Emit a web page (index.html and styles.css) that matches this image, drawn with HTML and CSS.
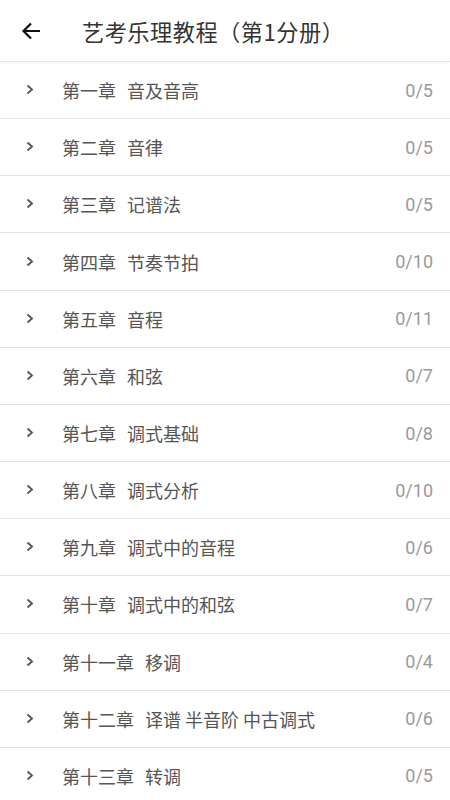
FILE: index.html
```html
<!DOCTYPE html>
<html lang="zh">
<head>
<meta charset="utf-8">
<link rel="stylesheet" href="styles.css">
</head>
<body>
<header class="bar">
  <svg class="back" width="20" height="18" viewBox="0 0 20 18"><path d="M19 9H3M10 1.5L2.5 9L10 16.5" fill="none" stroke="#111" stroke-width="2.2"/></svg>
  <h1 class="title">艺考乐理教程（第1分册）</h1>
</header>
<ul class="list">
  <li class="row"><svg class="chev" width="8" height="11" viewBox="0 0 8 11"><path d="M1.5 1.5L6 5.5L1.5 9.5" fill="none" stroke="#555" stroke-width="1.8"/></svg><span class="no">第一章</span><span class="name">音及音高</span><span class="count">0/5</span></li>
  <li class="row"><svg class="chev" width="8" height="11" viewBox="0 0 8 11"><path d="M1.5 1.5L6 5.5L1.5 9.5" fill="none" stroke="#555" stroke-width="1.8"/></svg><span class="no">第二章</span><span class="name">音律</span><span class="count">0/5</span></li>
  <li class="row"><svg class="chev" width="8" height="11" viewBox="0 0 8 11"><path d="M1.5 1.5L6 5.5L1.5 9.5" fill="none" stroke="#555" stroke-width="1.8"/></svg><span class="no">第三章</span><span class="name">记谱法</span><span class="count">0/5</span></li>
  <li class="row"><svg class="chev" width="8" height="11" viewBox="0 0 8 11"><path d="M1.5 1.5L6 5.5L1.5 9.5" fill="none" stroke="#555" stroke-width="1.8"/></svg><span class="no">第四章</span><span class="name">节奏节拍</span><span class="count">0/10</span></li>
  <li class="row"><svg class="chev" width="8" height="11" viewBox="0 0 8 11"><path d="M1.5 1.5L6 5.5L1.5 9.5" fill="none" stroke="#555" stroke-width="1.8"/></svg><span class="no">第五章</span><span class="name">音程</span><span class="count">0/11</span></li>
  <li class="row"><svg class="chev" width="8" height="11" viewBox="0 0 8 11"><path d="M1.5 1.5L6 5.5L1.5 9.5" fill="none" stroke="#555" stroke-width="1.8"/></svg><span class="no">第六章</span><span class="name">和弦</span><span class="count">0/7</span></li>
  <li class="row"><svg class="chev" width="8" height="11" viewBox="0 0 8 11"><path d="M1.5 1.5L6 5.5L1.5 9.5" fill="none" stroke="#555" stroke-width="1.8"/></svg><span class="no">第七章</span><span class="name">调式基础</span><span class="count">0/8</span></li>
  <li class="row"><svg class="chev" width="8" height="11" viewBox="0 0 8 11"><path d="M1.5 1.5L6 5.5L1.5 9.5" fill="none" stroke="#555" stroke-width="1.8"/></svg><span class="no">第八章</span><span class="name">调式分析</span><span class="count">0/10</span></li>
  <li class="row"><svg class="chev" width="8" height="11" viewBox="0 0 8 11"><path d="M1.5 1.5L6 5.5L1.5 9.5" fill="none" stroke="#555" stroke-width="1.8"/></svg><span class="no">第九章</span><span class="name">调式中的音程</span><span class="count">0/6</span></li>
  <li class="row"><svg class="chev" width="8" height="11" viewBox="0 0 8 11"><path d="M1.5 1.5L6 5.5L1.5 9.5" fill="none" stroke="#555" stroke-width="1.8"/></svg><span class="no">第十章</span><span class="name">调式中的和弦</span><span class="count">0/7</span></li>
  <li class="row"><svg class="chev" width="8" height="11" viewBox="0 0 8 11"><path d="M1.5 1.5L6 5.5L1.5 9.5" fill="none" stroke="#555" stroke-width="1.8"/></svg><span class="no">第十一章</span><span class="name">移调</span><span class="count">0/4</span></li>
  <li class="row"><svg class="chev" width="8" height="11" viewBox="0 0 8 11"><path d="M1.5 1.5L6 5.5L1.5 9.5" fill="none" stroke="#555" stroke-width="1.8"/></svg><span class="no">第十二章</span><span class="name">译谱 半音阶 中古调式</span><span class="count">0/6</span></li>
  <li class="row"><svg class="chev" width="8" height="11" viewBox="0 0 8 11"><path d="M1.5 1.5L6 5.5L1.5 9.5" fill="none" stroke="#555" stroke-width="1.8"/></svg><span class="no">第十三章</span><span class="name">转调</span><span class="count">0/5</span></li>
</ul>
</body>
</html>
```
FILE: styles.css
```css
html, body {
  margin: 0;
  padding: 0;
  background: #fff;
  font-family: "Noto Sans CJK SC", "Noto Sans", sans-serif;
  overflow: hidden;
}
.bar {
  height: 61px;
  display: flex;
  align-items: center;
  padding-left: 21px;
  border-bottom: 1px solid #e4e4e4;
  box-shadow: 0 1px 3px rgba(0,0,0,0.06);
  position: relative;
}
.back {
  display: block;
  margin-top: 1px;
}
.title {
  margin: 0 0 0 41px;
  font-size: 22.2px;
  font-weight: 400;
  color: #333;
  letter-spacing: 0.5px;
}
.list {
  list-style: none;
  margin: 0;
  padding: 0;
}
.row {
  height: 56.17px;
  border-bottom: 1px solid #e2e2e2;
  display: flex;
  align-items: center;
  padding: 0 17px 0 26px;
  color: #555;
  font-size: 18px;
}
.chev {
  display: block;
  flex: none;
  margin-right: 28px;
  margin-top: -1px;
}
.no {
  margin-right: 11px;
}
.name {
  flex: 1;
}
.count {
  color: #9a9a9a;
  font-family: Roboto, "Noto Sans", sans-serif;
  font-size: 18px;
}
```
